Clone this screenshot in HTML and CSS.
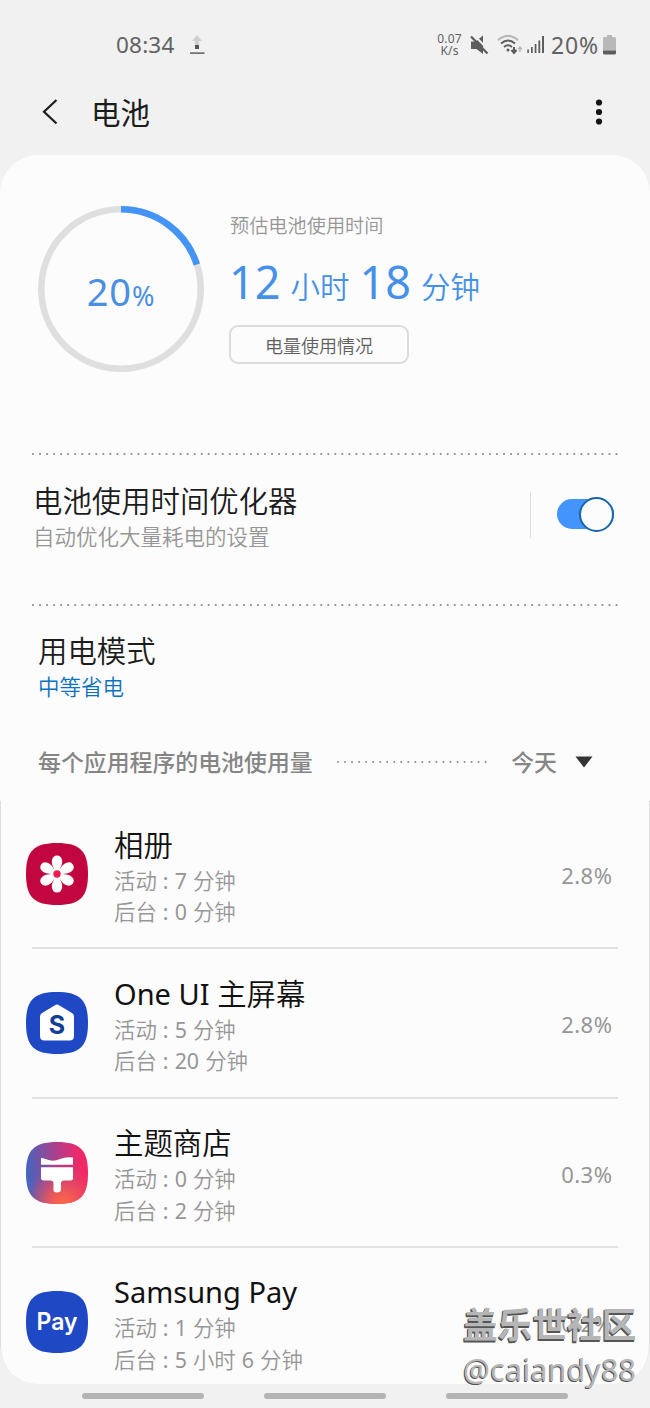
FILE: index.html
```html
<!DOCTYPE html>
<html lang="zh-CN">
<head>
<meta charset="utf-8">
<title>电池</title>
<link rel="stylesheet" href="styles.css">
</head>
<body>
<div class="screen">
  <div class="status">
    <span class="clock">08:34</span>
    <svg class="upload" width="16" height="22" viewBox="0 0 16 22"><path d="M8 1 13 7H10V11H6V7H3Z" fill="#cfcfcf"/><rect x="6" y="11" width="4" height="4" fill="#555"/><rect x="1" y="18.3" width="14.500" height="1.600" fill="#666"/></svg>
    <div class="speed"><span>0.07</span><span>K/s</span></div>
    <svg class="mute" width="19" height="20" viewBox="0 0 19 20"><path d="M1 6.500H5.500L13 .5V19L6.500 14H1Z" fill="#5d5d5d"/><path d="M3-1 19.500 16" stroke="#f1f1f1" stroke-width="2"/><path d="M1 1.500 17.500 18.500" stroke="#5d5d5d" stroke-width="2.200"/></svg>
    <svg class="wifi" width="25" height="20" viewBox="0 0 25 20" fill="none"><path d="M1 5.200Q11-3.500 21 5.200" stroke="#b8b8b8" stroke-width="2"/><path d="M4 8.500Q11 2.500 18 8.500M7 12Q11 8.500 15 12" stroke="#5d5d5d" stroke-width="2"/><circle cx="11" cy="15" r="1.500" fill="#5d5d5d"/><path d="M17 12V17M14.500 15 17 18 19.500 15" stroke="#5d5d5d" stroke-width="2"/><path d="M23 17V12M20.800 14.200 23 12 25 14.200" stroke="#b8b8b8" stroke-width="1.500"/></svg>
    <svg class="signal" width="18" height="18" viewBox="0 0 18 18" fill="#5d5d5d"><path d="M.3 13.500H1.900V17H.3ZM4 11H5.700V17H4ZM7.700 8H9.400V17H7.700ZM11.400 4.500H13.200V17H11.400ZM15 0H17V17H15Z"/></svg>
    <span class="level">20%</span>
    <svg class="batt" width="13" height="20" viewBox="0 0 13 20"><path d="M4 0H9V2H11.500Q13 2 13 3.500V15.500H0V3.500Q0 2 1.500 2H4Z" fill="#b8b8b8"/><path d="M0 15.500H13V18Q13 19.500 11.500 19.500H1.500Q0 19.500 0 18Z" fill="#5d5d5d"/></svg>
  </div>
  <header class="bar">
    <svg width="16" height="26" viewBox="0 0 16 26" fill="none"><path d="M15.500 1 3 12.700 15.500 24.500" stroke="#1c1c1c" stroke-width="2.200"/></svg>
    <h1>电池</h1>
    <svg class="more" width="8" height="27" viewBox="0 0 8 27" fill="#151515"><circle cx="4" cy="3.500" r="3.100"/><circle cx="4" cy="13" r="3.100"/><circle cx="4" cy="22.500" r="3.100"/></svg>
  </header>
  <main class="card">
    <section class="summary">
      <div class="ring">
        <svg width="168" height="168" viewBox="0 0 168 168" fill="none"><circle cx="84" cy="84" r="79.700" stroke="#dfdfdf" stroke-width="6.600"/><path d="M84 4.300A79.700 79.700 0 0 1 159.800 59.400" stroke="#4394f6" stroke-width="6.600"/></svg>
        <div class="pct">20<small>%</small></div>
      </div>
      <div class="estimate">
        <div class="caption">预估电池使用时间</div>
        <div class="time"><b>12</b><span>小时</span><b>18</b><span>分钟</span></div>
        <div class="button">电量使用情况</div>
      </div>
    </section>
    <svg class="dots" width="588" height="4"><path d="M2 2H587" /></svg>
    <section class="optimizer">
      <div class="words"><div class="title">电池使用时间优化器</div><div class="sub">自动优化大量耗电的设置</div></div>
      <div class="rule"></div>
      <div class="toggle"><i></i></div>
    </section>
    <svg class="dots" width="588" height="4"><path d="M2 2H587" /></svg>
    <section class="mode"><div class="title">用电模式</div><div class="sub blue">中等省电</div></section>
    <div class="usage">
      <span class="usage-title">每个应用程序的电池使用量</span>
      <svg class="dots short" width="150" height="4"><path d="M2 2H149.700"/></svg>
      <span class="today">今天</span>
      <svg width="18" height="12" viewBox="0 0 18 12"><path d="M.5.500H17.500L9 11.500Z" fill="#333"/></svg>
    </div>
    <div class="apps">
      <div class="app">
        <svg class="icon" width="62" height="62" viewBox="0 0 62 62"><path d="M31 0C54 0 62 8 62 31S54 62 31 62 0 54 0 31 8 0 31 0Z" fill="#c2063f"/><g fill="#fff"><path id="petal" d="M31 31C26 23 25.500 20 26 17Q27 12.500 31 12.500T36 17C36.500 20 36 23 31 31Z"/><use href="#petal" transform="rotate(60 31 31)"/><use href="#petal" transform="rotate(120 31 31)"/><use href="#petal" transform="rotate(180 31 31)"/><use href="#petal" transform="rotate(240 31 31)"/><use href="#petal" transform="rotate(300 31 31)"/><circle cx="31" cy="31" r="6"/></g><circle cx="31" cy="31" r="3.700" fill="#ed1c4b"/></svg>
        <div class="words"><div class="title">相册</div><div class="sub">活动 <em>: 7</em> 分钟</div><div class="sub">后台 <em>: 0</em> 分钟</div></div>
        <span class="share">2.8%</span>
      </div>
      <div class="app">
        <svg class="icon" width="62" height="62" viewBox="0 0 62 62"><path d="M31 0C54 0 62 8 62 31S54 62 31 62 0 54 0 31 8 0 31 0Z" fill="#1f49c4"/><path d="M29 13.200Q31 12 33 13.200L46 21Q48 22.200 48 24.500V44Q48 48.500 43.500 48.500H18.500Q14 48.500 14 44V24.500Q14 22.200 16 21Z" fill="#fff"/><text class="home-letter" x="31" y="41.500" text-anchor="middle">S</text></svg>
        <div class="words"><div class="title"><em>One UI</em> 主屏幕</div><div class="sub">活动 <em>: 5</em> 分钟</div><div class="sub">后台 <em>: 20</em> 分钟</div></div>
        <span class="share">2.8%</span>
      </div>
      <div class="app">
        <svg class="icon" width="62" height="62" viewBox="0 0 62 62"><defs><linearGradient id="base" x1="0" y1=".5" x2="1" y2=".4"><stop offset="0" stop-color="#4166bf"/><stop offset=".48" stop-color="#a6418f"/><stop offset=".9" stop-color="#f12867"/></linearGradient><radialGradient id="warm" cx=".6" cy="1" r=".62"><stop offset="0" stop-color="#ff6846"/><stop offset=".35" stop-color="#f85b50" stop-opacity=".85"/><stop offset="1" stop-color="#ee4960" stop-opacity="0"/></radialGradient></defs><path d="M31 0C54 0 62 8 62 31S54 62 31 62 0 54 0 31 8 0 31 0Z" fill="url(#base)"/><path d="M31 0C54 0 62 8 62 31S54 62 31 62 0 54 0 31 8 0 31 0Z" fill="url(#warm)"/><path d="M15 16Q18 16 21 17.500Q27 20 34 17Q39 14.800 47 15.500V22.800H15ZM15 25.200H47V36Q47 38.500 44.500 38.500H38Q35 38.500 35 41.500V47Q35 50.500 31 50.500T27.500 47V41.500Q27.500 38.500 24.500 38.500H18Q15 38.500 15 36Z" fill="#fff"/></svg>
        <div class="words"><div class="title">主题商店</div><div class="sub">活动 <em>: 0</em> 分钟</div><div class="sub">后台 <em>: 2</em> 分钟</div></div>
        <span class="share">0.3%</span>
      </div>
      <div class="app">
        <svg class="icon" width="62" height="62" viewBox="0 0 62 62"><path d="M31 0C54 0 62 8 62 31S54 62 31 62 0 54 0 31 8 0 31 0Z" fill="#1f49c4"/><text class="pay-letter" x="31" y="38.500" text-anchor="middle" textLength="41" lengthAdjust="spacingAndGlyphs">Pay</text></svg>
        <div class="words"><div class="title"><em>Samsung Pay</em></div><div class="sub">活动 <em>: 1</em> 分钟</div><div class="sub">后台 <em>: 5</em> 小时 <em>6</em> 分钟</div></div>
        <span class="share">0.2%</span>
      </div>
    </div>
  </main>
  <nav class="nav"><i></i><i></i><i></i></nav>
  <div class="watermark"><div class="site">盖乐世社区</div><div class="user">@caiandy88</div></div>
</div>
</body>
</html>
```
FILE: styles.css
```css
* { box-sizing: border-box; }
body { margin: 0; background: #f1f1f1; font-family: "Noto Sans", "Noto Sans CJK SC", sans-serif; }
svg { display: block; flex: none; overflow: visible; }
.screen { position: relative; width: 650px; height: 1408px; overflow: hidden; display: flex; flex-direction: column; }

.status { height: 89px; padding: 0 34px 0 116px; display: flex; align-items: center; color: #626262; white-space: nowrap; }
.clock { font-size: 22.5px; letter-spacing: .2px; }
.upload { margin-left: 14px; }
.speed { margin-left: auto; margin-right: 8px; display: flex; flex-direction: column; align-items: center; font-size: 12px; line-height: 11.500px; letter-spacing: .2px; }
.mute { margin-right: 8px; }
.wifi { margin-right: 5px; }
.signal { margin-right: 6px; }
.level { font-size: 23px; letter-spacing: .9px; margin-right: 4px; }

.bar { height: 66px; padding: 0 47px 20px 41px; display: flex; align-items: center; }
.bar h1 { margin: 2px auto 0 34px; font-size: 29.500px; line-height: 46px; font-weight: 400; color: #1c1c1c; }

.card { flex: none; height: 1229px; background: #fcfcfc; border-radius: 38px; overflow: hidden; padding-top: 50px; }
.summary { display: flex; height: 247px; padding-left: 37px; gap: 24px; }
.ring { width: 168px; height: 168px; display: grid; }
.ring > * { grid-area: 1 / 1; }
.pct { place-self: center; font-size: 38px; line-height: 40px; color: #4a8fe4; padding-top: 8px; letter-spacing: .8px; }
.pct small { font-size: 27px; }
.estimate { flex: 1; }
.caption { font-size: 19.200px; line-height: 28px; margin: 7px 0 -1px 1px; color: #969696; font-weight: 350; }
.time { display: flex; align-items: baseline; height: 86px; padding-top: 10px; line-height: 66px; color: #4590e9; white-space: nowrap; }
.time b { font-size: 45px; font-weight: 400; }
.time span { font-size: 29.500px; font-weight: 350; margin: 0 10px; position: relative; top: -1px; }
.button { width: 180px; height: 39px; border: 2px solid #dcdcdc; border-radius: 9px; text-align: center; font-size: 18px; line-height: 39px; font-weight: 350; color: #606060; }

.dots { margin-left: 31px; }
.dots path { stroke: #8c8c8c; stroke-width: 2.200; stroke-linecap: round; stroke-dasharray: 0 7.030; }
.title { font-size: 29.400px; line-height: 40px; color: #1c1c1c; font-weight: 350; white-space: nowrap; }
.sub { font-size: 21.500px; line-height: 31px; color: #969696; font-weight: 350; white-space: nowrap; }
.sub.blue { color: #0c72bf; }
.optimizer { height: 147px; padding-left: 33px; display: flex; }
.optimizer .words { width: 497px; padding-top: 25px; }
.rule { width: 1px; height: 46px; margin-top: 36px; background: #dedede; }
.toggle { width: 57px; height: 30px; margin: 43px 0 0 26px; border-radius: 15px; background: #4394fc; display: flex; align-items: center; justify-content: flex-end; }
.toggle i { width: 35px; height: 35px; flex: none; border-radius: 50%; background: #fcfcfc; border: 2px solid #1767a9; }
.mode { height: 115px; padding: 24px 0 0 38px; }
.usage { height: 79px; padding: 0 57px 0 38px; display: flex; align-items: center; color: #858585; font-size: 22.900px; font-weight: 500; line-height: 34px; white-space: nowrap; }
.usage span { padding-top: 2px; }
.usage .short { margin-left: 23px; }
.short path { stroke-width: 2; }
.today { margin-left: auto; margin-right: 18px; }

.apps { height: 584px; border: solid #dfdfdf; border-width: 0 1px; border-radius: 0 0 38px 38px; }
.app { position: relative; height: 149.300px; padding: 0 37px 0 24px; display: flex; }
.app + .app::before { content: ""; position: absolute; left: 31px; right: 31px; top: -3px; height: 2px; background: #e2e2e2; }
.icon { margin: 42px 26px 0 1px; }
.app .words { flex: 1; padding-top: 23.500px; }
.app em { font-style: normal; font-weight: 400; }
.app .title { color: #111; }
.app .title em { font-size: 29px; }
.app .sub { font-size: 21.400px; line-height: 31.500px; word-spacing: .5px; }
.share { margin-top: 59px; line-height: 31px; font-size: 22px; letter-spacing: .5px; margin-right: -.5px; color: #969696; }
.home-letter { font: 700 25px "Inter", sans-serif; fill: #123f96; }
.pay-letter { font: 600 24px "Inter", sans-serif; fill: #fff; }

.nav { display: flex; justify-content: space-between; padding: 9px 82px 0; }
.nav i { width: 122px; height: 6px; border-radius: 3px; background: #b4b4b4; }
.watermark { position: absolute; left: 463px; top: 1301px; white-space: nowrap; color: #b6b6b6; text-shadow: -1px 1px #555, -1px 2px #555; }
.site { font-size: 34.700px; line-height: 48px; font-weight: 700; }
.user { font-size: 30px; line-height: 42px; letter-spacing: .4px; text-shadow: -1px 1px #555; }
```
